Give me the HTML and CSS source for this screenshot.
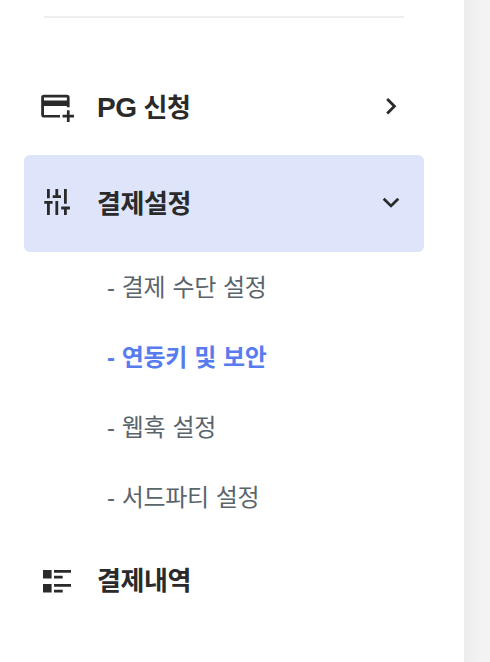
FILE: index.html
```html
<!DOCTYPE html>
<html lang="ko">
<head>
  <title>결제설정</title>
  <meta charset="utf-8">
  <meta name="viewport" content="width=device-width, initial-scale=1">
  <link rel="stylesheet" href="styles.css">
</head>
<body>
  <nav class="sidebar">
    <hr class="sidebar-divider">

    <ul class="menu">
      <li class="menu-item">
        <a href="#" class="menu-link">
          <svg class="menu-icon" viewBox="0 0 36 36" aria-hidden="true">
            <path fill-rule="evenodd" d="M6 5.700h22.800a2.800 2.800 0 0 1 2.800 2.800v9.800h-2.700v-1.400H6v9h16v2.700H6a2.800 2.800 0 0 1-2.800-2.800V8.500A2.800 2.800 0 0 1 6 5.700zM6 8.400v3.200h22.900V8.400z"/>
            <path d="M28.900 21.200h2.700v4.500h4.500v2.700h-4.500V33h-2.700v-4.600h-4.400v-2.700h4.400z"/>
          </svg>
          <span class="menu-text"><span class="menu-latin">PG</span> 신청</span>
          <svg class="menu-arrow" viewBox="0 0 24 24" aria-hidden="true">
            <path d="m8.200 4 7.200 7.300-7.200 7.300"/>
          </svg>
        </a>
      </li>
      <li class="menu-item">
        <a href="#" class="menu-link menu-link-opened" aria-expanded="true">
          <svg class="menu-icon" viewBox="0 0 36 36" aria-hidden="true">
            <path d="M9 4h2.800v9.300H9zM6.300 16h8.300v2.800h-2.800V30H9V18.800H6.300zM17.400 4h2.800v6.200H23V13h-8.300v-2.800h2.700zM17.400 16h2.800v14h-2.800zM26 4h2.800v14.800H26zM23.200 21.600h8.700v2.800h-3.100V30H26v-5.600h-2.800z"/>
          </svg>
          <span class="menu-text">결제설정</span>
          <svg class="menu-arrow" viewBox="0 0 24 24" aria-hidden="true">
            <path d="m4.700 7.700 7.300 7.200 7.300-7.200"/>
          </svg>
        </a>

        <ul class="submenu">
          <li><a href="#" class="submenu-link">- 결제 수단 설정</a></li>
          <li><a href="#" class="submenu-link submenu-link-current" aria-current="page">- 연동키 및 보안</a></li>
          <li><a href="#" class="submenu-link">- 웹훅 설정</a></li>
          <li><a href="#" class="submenu-link">- 서드파티 설정</a></li>
        </ul>
      </li>
      <li class="menu-item">
        <a href="#" class="menu-link">
          <svg class="menu-icon" viewBox="0 0 36 36" aria-hidden="true">
            <path d="M5 8h8.600v8.400H5zM5 22h8.600v8.600H5zM16 8h17v2.700H16zM16 13.700h8.700v2.700H16zM16 22h17v2.700H16zM16 27.700h8.700v2.900H16z"/>
          </svg>
          <span class="menu-text">결제내역</span>
        </a>
      </li>
    </ul>
  </nav>
</body>
</html>
```

FILE: styles.css
```css
*, *::before, *::after {
  margin: 0;
  padding: 0;
  box-sizing: border-box;
}

body {
  min-height: 100vh;
  display: flex;
  background: linear-gradient(to right, #ECECEC 464px, #F3F3F3 482px);
  color: #2A2A2A;
  font-family: "Liberation Sans", "Noto Sans CJK KR", sans-serif;
}

.sidebar {
  width: 464px;
  padding: 16px 40px 0 24px;
  background-color: #FFFFFF;
}

.sidebar-divider {
  height: 2px;
  margin: 0 20px 41px;
  border: 0;
  background-color: #EEEEEE;
}

.menu, .submenu {
  list-style: none;
}

.menu-link {
  display: flex;
  align-items: center;
  height: 96px;
  padding: 0 21px 0 14px;
  border-radius: 6px;
  color: inherit;
  text-decoration: none;
}

.menu-link-opened {
  height: 97px;
  padding-bottom: 1px;
  background-color: #DEE4FA;
}

.menu-icon {
  width: 36px;
  height: 36px;
  fill: #2A2A2A;
}

.menu-text {
  margin: 2px 0 0 23px;
  font-size: 26px;
  font-weight: 700;
  line-height: 36px;
  letter-spacing: -0.4px;
}

.menu-latin {
  font-size: 28px;
}

.menu-arrow {
  width: 24px;
  height: 24px;
  margin-left: auto;
  fill: none;
  stroke: #2A2A2A;
  stroke-width: 2.8;
}

.submenu-link {
  display: block;
  height: 70px;
  padding: 1px 0 0 83px;
  color: #59646B;
  font-size: 24px;
  line-height: 70px;
  letter-spacing: -0.4px;
  word-spacing: 1px;
  text-decoration: none;
}

.submenu-link-current {
  color: #587CF0;
  font-weight: 700;
}
```
